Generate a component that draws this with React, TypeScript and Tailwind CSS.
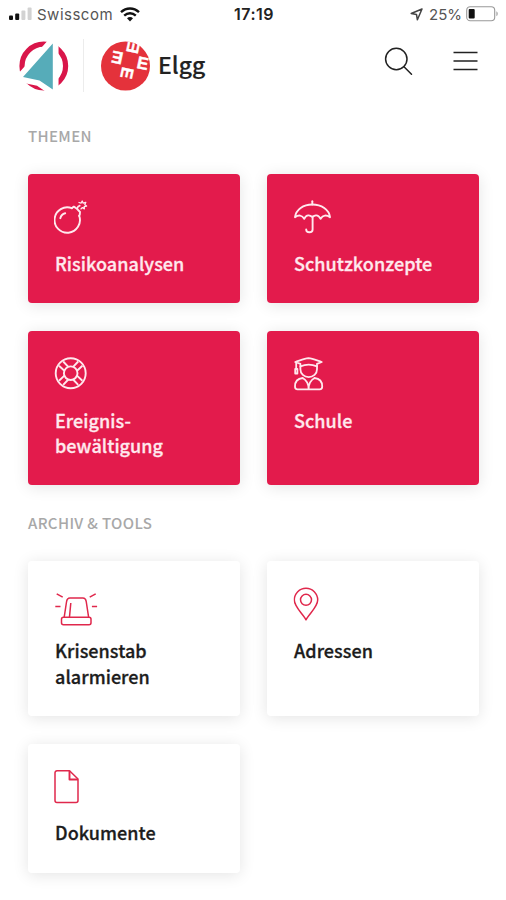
import React from "react";

interface Tile {
  label: string[];
  icon: React.ReactNode;
}

const BombIcon = () => (
  <svg width="34" height="34" viewBox="0 0 34 34" fill="none" stroke="currentColor" strokeWidth="1.9" strokeLinecap="round" strokeLinejoin="round">
    <path d="M17.8 8.2A12.7 12.7 0 1 0 25.2 15.8" />
    <path d="M17.8 8.2l2-1.6 3.2 2.2 3 3.2-.2 2.4-.6 1.4" />
    <path d="M6.3 18.2c.7-2.8 2.3-4.3 4.9-4.9" />
    <path d="M23.2 8.8c.2-1.7 1-2.8 2.6-3.2" strokeWidth="1.6" />
    <path d="M25 2.5l2 .7 1.2-2.2 1 2.2 2.6-.9-1 2.4 1.8 1.4-2.4.6.2 2.2-2-1.3-1.5 1.3" strokeWidth="1.3" />
  </svg>
);

const UmbrellaIcon = () => (
  <svg className="translate-x-px" width="38" height="34" viewBox="0 0 38 34" fill="none" stroke="currentColor" strokeWidth="1.9" strokeLinecap="round" strokeLinejoin="round">
    <path d="M18.3 1.2v3.3" />
    <path d="M1 17.2C2 9.6 9.3 4.5 18.3 4.5S35.2 9.6 36 17.2c-3.6-2.5-7-2.3-9.4 1.6-1.6-2.9-3.2-3.6-4.7-3.4-1.3.2-2.3.7-3.6 1.5-1.3-.8-2.3-1.3-3.6-1.5-1.5-.2-3.1.5-4.5 3.4C8 14.9 4.6 14.7 1 17.2z" />
    <path d="M18.6 17v12.4c0 3.800-6.400 3.800-6.400 0" />
  </svg>
);

const LifebuoyIcon = () => (
  <svg width="34" height="34" viewBox="0 0 34 34" fill="none" stroke="currentColor" strokeWidth="1.9">
    <circle cx="16.7" cy="16.2" r="15" />
    <circle cx="16.7" cy="16.2" r="6.8" />
    <path d="M10.400 13.800L5 8.700M14.300 9.900L9.200 4.500M23 13.800L28.400 8.700M19.100 9.900L24.200 4.500M10.400 18.600L5 23.700M14.300 22.500L9.200 27.900M23 18.600L28.400 23.700M19.100 22.500L24.200 27.900" />
  </svg>
);

const GraduateIcon = () => (
  <svg className="translate-x-px" width="30" height="34" viewBox="0 0 30 34" fill="none" stroke="currentColor" strokeWidth="1.8" strokeLinecap="round" strokeLinejoin="round">
    <path d="M1.2 5C5.5 3.7 10.2 1.5 14.5 1.2 18.8 1.5 23.5 3.7 27.8 5L23 6.8v5.4c0 4.7-3.8 8-8.3 8s-8.3-3.3-8.3-8V6.8z" />
    <path d="M6.400 9.300c4.800-2 11.800-2 16.600 0" />
    <path d="M2.200 5.500v6M1.200 12h2.200v4.500H1.200z" />
    <path d="M8.700 21C3 21.600 1 25.500 1 29.500c0 2 .6 2.900 2.500 2.900h22.200c1.900 0 2.500-.9 2.500-2.900 0-4-2-7.900-7.700-8.500M8.700 21c2.600 1.500 5.900 5 5.900 11 0-6 3.300-9.500 5.900-11" />
  </svg>
);

const SirenIcon = () => (
  <svg className="translate-x-px translate-y-[5.5px]" width="44" height="34" viewBox="0 0 44 34" fill="none" stroke="currentColor" strokeWidth="1.5" strokeLinejoin="round">
    <rect x="6.5" y="24.7" width="29.5" height="7.5" rx="2" />
    <path d="M9.200 24.700L11.500 9.500C11.800 7.100 13 5.500 15 5.500h12.800c2 0 3.200 1.600 3.500 4l2.300 15.200" />
    <path d="M14.500 24.500l1.300-14" />
    <path d="M1.700 1.400l6 3.300M40.700 1.400l-6 3.300M.3 14h5.200M36.900 14h5.200" />
  </svg>
);

const PinIcon = () => (
  <svg className="translate-x-[0.5px]" width="26" height="34" viewBox="0 0 26 34" fill="none" stroke="currentColor" strokeWidth="1.5" strokeLinejoin="round">
    <path d="M12.500 32.800C9.500 27 .8 19.900.8 13a11.700 11.700 0 0 1 23.400 0C24.200 19.900 15.500 27 12.500 32.800z" />
    <circle cx="12.5" cy="12.8" r="5.5" />
  </svg>
);

const FileIcon = () => (
  <svg width="26" height="34" viewBox="0 0 26 34" fill="none" stroke="currentColor" strokeWidth="1.5" strokeLinejoin="round">
    <path d="M3 .8h12.500L24 9v21.500a2 2 0 0 1-2 2H3a2 2 0 0 1-2-2V2.800a2 2 0 0 1 2-2z" />
    <path d="M15.500.8V9.500H24" strokeWidth="1.9" />
  </svg>
);

const AppLogo = () => (
  <svg width="50" height="52" viewBox="0 0 50 52">
    <circle cx="24.8" cy="26" r="21.8" fill="none" stroke="#d9164a" strokeWidth="5.2" />
    <path d="M33.8 3.5V49.5L20.5 40.5 4 37z" fill="#fff" stroke="#fff" strokeWidth="11.5" strokeMiterlimit="8" />
    <path d="M33.8 3.5V49.5L20.5 40.5 4 37z" fill="#56acb9" />
  </svg>
);

// Municipality crest: four E letters arranged around a tilted square
const ElggCrest = () => (
  <svg className="overflow-visible" width="50" height="50" viewBox="0 0 50 50">
    <circle cx="24.5" cy="25" r="24.5" fill="#e4323b" />
    <g
      transform="translate(29 19.3) rotate(12)"
      fill="#fff"
      stroke="#fff"
      strokeWidth=".4"
      className="font-['Liberation_Sans',sans-serif] text-[17px] font-bold"
      textAnchor="middle"
    >
      <text x="13" y="6">E</text>
      <text x="13" y="6" transform="rotate(90)">E</text>
      <text x="13" y="6" transform="rotate(180)">E</text>
      <text x="13" y="6" transform="rotate(270)">E</text>
    </g>
  </svg>
);

const StatusBar = () => (
  <div className="grid h-7 grid-cols-[1fr_auto_1fr] items-center pl-[9px] pr-[7px] font-['Inter',sans-serif] text-[15px] leading-none text-[#555]">
    <div className="flex items-center">
      <svg width="24" height="14" viewBox="0 0 24 14">
        <rect x="0" y="8.5" width="4" height="4.5" rx="1" fill="#111" />
        <rect x="6.2" y="6.5" width="4" height="6.5" rx="1" fill="#111" />
        <rect x="12.4" y="3.5" width="4" height="9.5" rx="1" fill="#d2d2d2" />
        <rect x="18.6" y="0.5" width="4" height="12.5" rx="1" fill="#d2d2d2" />
      </svg>
      <span className="ml-[4px] tracking-[0.5px]">Swisscom</span>
      <svg className="ml-[7px]" width="20" height="15" viewBox="0 0 20 15" fill="none" stroke="#111" strokeWidth="2.4">
        <path d="M1 5.200c5.200-4.900 12.800-4.900 18 0" />
        <path d="M4.200 8.600c3.400-3.100 8.200-3.100 11.600 0" />
        <path d="M10 14.500l-3-3.200c1.800-1.600 4.200-1.600 6 0z" fill="#111" stroke="none" />
      </svg>
    </div>
    <span className="text-[16px] font-semibold tracking-[0.5px] text-[#222]">17:19</span>
    <div className="flex items-center justify-end">
      <svg width="13" height="13" viewBox="0 0 13 13" fill="none" stroke="#444" strokeWidth="1.5" strokeLinejoin="round">
        <path d="M12 1L1.200 5.500l5.300 1 .9 5.300z" />
      </svg>
      <span className="ml-[6px]">25%</span>
      <svg className="ml-[4px]" width="33" height="16" viewBox="0 0 33 16">
        <rect x=".7" y=".7" width="28" height="14" rx="3.5" fill="none" stroke="#999" strokeWidth="1.1" />
        <rect x="2.7" y="3" width="6" height="9.5" rx="1" fill="#111" />
        <path d="M30.300 5.200c2 .8 2 4.200 0 5z" fill="#aaa" />
      </svg>
    </div>
  </div>
);

const Header = () => (
  <header className="flex h-[73px] items-center pt-[2px] pl-[19px] pr-[28px]">
    <AppLogo />
    <div className="ml-[14px] h-[53px] w-px bg-[#ececec]" />
    <div className="ml-[17px] flex items-center">
      <ElggCrest />
      <span className="ml-[7px] pb-[3px] text-[23px] leading-[30px] font-medium text-[#222] [-webkit-text-stroke:0.2px]">Elgg</span>
    </div>
    <div className="ml-auto flex items-center gap-[40px] pb-[9px] text-[#222]">
      <svg width="29" height="29" viewBox="0 0 29 29" fill="none" stroke="currentColor" strokeWidth="1.5" strokeLinecap="round">
        <circle cx="12.3" cy="12" r="10.7" />
        <path d="M20 19.800l7.500 7.500" />
      </svg>
      <svg width="25" height="20" viewBox="0 0 25 20" stroke="currentColor" strokeWidth="1.7">
        <path d="M.5 1.500h24M.5 10h24M.5 18.500h24" />
      </svg>
    </div>
  </header>
);

const Card: React.FC<{ tile: Tile; primary?: boolean }> = ({ tile, primary }) => (
  <div
    className={`flex flex-col rounded-[4px] px-[27px] pt-[26px] pb-[27px] shadow-[0_2px_16px_rgba(0,0,0,0.11)] ${
      primary ? "bg-[#e31b4c] text-[#ffe9ee]" : "bg-white text-[#e0284c]"
    }`}
  >
    <div className="-ml-px h-[34px]">{tile.icon}</div>
    <div
      className={`mt-[16.8px] text-[18px] leading-[25.4px] font-medium tracking-[0.05px] [-webkit-text-stroke:0.3px] ${
        primary ? "" : "text-[#1c1c1c]"
      }`}
    >
      {tile.label.map((line) => (
        <div key={line} className="whitespace-nowrap">
          {line}
        </div>
      ))}
    </div>
  </div>
);

const SectionTitle: React.FC<{ children: React.ReactNode }> = ({ children }) => (
  <h2 className="text-[15px] leading-[20px] font-medium tracking-[0.35px] text-[#a8a8a8]">{children}</h2>
);

const topics: Tile[] = [
  { label: ["Risikoanalysen"], icon: <BombIcon /> },
  { label: ["Schutzkonzepte"], icon: <UmbrellaIcon /> },
  { label: ["Ereignis-", "bewältigung"], icon: <LifebuoyIcon /> },
  { label: ["Schule"], icon: <GraduateIcon /> },
];

const tools: Tile[] = [
  { label: ["Krisenstab", "alarmieren"], icon: <SirenIcon /> },
  { label: ["Adressen"], icon: <PinIcon /> },
  { label: ["Dokumente"], icon: <FileIcon /> },
];

export default function App() {
  return (
    <div className="h-[900px] w-[506px] overflow-hidden bg-white font-['Noto_Sans_CJK_SC',sans-serif]">
      <StatusBar />
      <Header />
      <main className="px-[28px] pt-[25px]">
        <SectionTitle>THEMEN</SectionTitle>
        <div className="mt-[28px] grid w-[451px] grid-cols-2 gap-x-[27px] gap-y-[27.6px]">
          {topics.map((tile) => (
            <Card key={tile.label[0]} tile={tile} primary />
          ))}
        </div>
        <div className="mt-[28px]">
          <SectionTitle>ARCHIV &amp; TOOLS</SectionTitle>
        </div>
        <div className="mt-[28px] grid w-[451px] grid-cols-2 gap-x-[27px] gap-y-[27.6px]">
          {tools.map((tile) => (
            <Card key={tile.label[0]} tile={tile} />
          ))}
        </div>
      </main>
    </div>
  );
}
